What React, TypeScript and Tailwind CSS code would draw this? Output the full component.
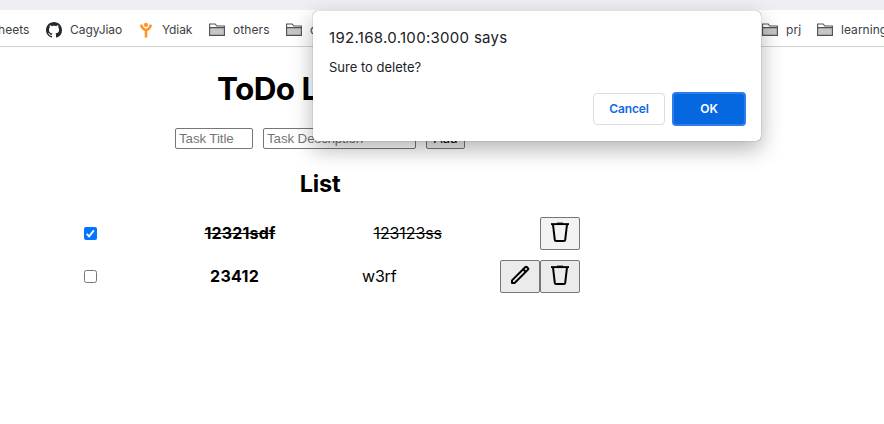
import React from "react";

function Folder() {
  return (
    <svg width="16" height="14" viewBox="0 0 16 14" className="block shrink-0">
      <path d="M.6 12.4V1h5.6l1.6 2h7.6v9.4z" fill="#fff" stroke="#505255" strokeWidth="1.1" />
      <path d="M.6 12.4V4.6h14.8v7.8z" fill="#c6c6c6" stroke="#505255" strokeWidth="1.1" />
    </svg>
  );
}

function GitHub() {
  return (
    <svg width="16" height="16" viewBox="0 0 16 16" className="block shrink-0" fill="#24292f">
      <path d="M8 0C3.58 0 0 3.58 0 8c0 3.54 2.29 6.53 5.47 7.59.4.07.55-.17.55-.38 0-.19-.01-.82-.01-1.49-2.01.37-2.53-.49-2.69-.94-.09-.23-.48-.94-.82-1.13-.28-.15-.68-.52-.01-.53.63-.01 1.08.58 1.23.82.72 1.21 1.87.87 2.33.66.07-.52.28-.87.51-1.07-1.78-.2-3.64-.89-3.64-3.95 0-.87.31-1.59.82-2.15-.08-.2-.36-1.02.08-2.12 0 0 .67-.21 2.2.82.64-.18 1.32-.27 2-.27s1.36.09 2 .27c1.53-1.04 2.2-.82 2.2-.82.44 1.1.16 1.92.08 2.12.51.56.82 1.27.82 2.15 0 3.07-1.87 3.75-3.65 3.95.29.25.54.73.54 1.48 0 1.07-.01 1.93-.01 2.2 0 .21.15.46.55.38A8.01 8.01 0 0 0 16 8c0-4.42-3.58-8-8-8z" />
    </svg>
  );
}

function Ydiak() {
  return (
    <svg width="12" height="16" viewBox="0 0 12 16" className="block shrink-0">
      <circle cx="6" cy="2.9" r="2.1" fill="#ff9429" />
      <path d="M1 2.6C2 5.600 3.600 7.600 6 8c2.400-.4 4-2.400 5-5.400M6 7.800v7.700" fill="none" stroke="#ff9429" strokeWidth="2.600" />
    </svg>
  );
}

function Trash() {
  return (
    <svg width="20" height="22" viewBox="0 0 20 22" className="block" fill="none" stroke="#000" strokeWidth="2">
      <path d="M1 2.100h18" strokeWidth="1.900" />
      <path d="M7 1.200h6" strokeWidth="1.200" />
      <path d="M3 2.500l1.800 15.300q.1 1.200 1.300 1.200h7.800q1.200 0 1.300-1.200L17 2.500" />
    </svg>
  );
}

function Pencil() {
  return (
    <svg width="20" height="20" viewBox="0 0 20 20" className="block" fill="none" stroke="#000" strokeWidth="2" strokeLinejoin="round">
      <path d="M2 18v-2.600L15.400 2q.7-.7 1.400 0l1.200 1.200q.7.700 0 1.400L4.600 18zM13.200 4.200l2.600 2.600" />
    </svg>
  );
}

const iconButton = "flex h-[33px] w-10 justify-center rounded-[2px] border border-[#767676] pt-1";

export default function App() {
  return (
    <div className="relative h-[424px] w-[884px] overflow-hidden bg-white font-['Inter',sans-serif] text-black">
      <div className="h-[10px] bg-[#eeeff2]" />
      <div className="flex h-[37px] items-center justify-between border-b border-[#d0d1d3] pb-px pt-1 text-[12px] leading-4 tracking-[0.04px] text-[#3c4043]">
        <div className="flex items-center whitespace-nowrap">
          <span className="flex w-[46px] shrink-0"><span className="-ml-[2px]">heets</span></span>
          <GitHub />
          <span className="ml-2 w-[70px] tracking-[-0.05px]">CagyJiao</span>
          <Ydiak />
          <span className="ml-[10px] w-[47px] tracking-[-0.1px]">Ydiak</span>
          <Folder />
          <span className="ml-2 w-[53px] tracking-[0.1px]">others</span>
          <Folder />
          <span className="ml-2">docs</span>
        </div>
        <div className="flex w-[122px] items-center whitespace-nowrap">
          <Folder />
          <span className="ml-2 w-[31px] shrink-0">prj</span>
          <Folder />
          <span className="ml-2">learning</span>
        </div>
      </div>

      <main className="w-[640px]">
        <h1 className="pl-[217px] pt-[22px] text-[31.5px] font-bold leading-10 tracking-[-0.6px]">ToDo List</h1>
        <div className="flex gap-[10px] pl-[175px] pt-[19px] font-['Liberation_Sans',sans-serif] text-[13.333px]">
          <input aria-label="Task Title" placeholder="Task Title" className="h-[21px] w-[78px] rounded-[2px] border border-[#767676] px-[3px] tracking-[-0.1px] placeholder:text-[#757575]" />
          <input aria-label="Task Description" placeholder="Task Description" className="h-[21px] w-[153px] rounded-[2px] border border-[#767676] px-[3px] tracking-[-0.1px] placeholder:text-[#757575]" />
          <button className="h-[21px] w-[39px] rounded-[2px] border border-[#767676] bg-[#efefef] leading-[19px]">Add</button>
        </div>
        <h2 className="pt-5 text-center text-[23.5px] font-bold leading-[29px] tracking-[-0.2px]">List</h2>
        <div className="flex flex-col gap-[10px] pl-[84px] pt-[19px] text-[16px]">
          <div className="flex h-[33px] w-[496px] items-center">
            <span className="flex h-[13px] w-[13px] items-center justify-center rounded-[2px] bg-[#0075ff]">
              <svg width="11" height="11" viewBox="0 0 11 11"><path d="M1.7 5.8l2.4 2.5 4.8-6" fill="none" stroke="#fff" strokeWidth="1.9" /></svg>
            </span>
            <b className="ml-[107.5px] w-[169px] pb-0.5 tracking-[0.15px] line-through">12321sdf</b>
            <span className="pb-0.5 tracking-[-0.1px] line-through">123123ss</span>
            <button aria-label="Delete" className={iconButton + " ml-auto bg-[#f3f3f3]"}><Trash /></button>
          </div>
          <div className="flex h-[33px] w-[496px] items-center">
            <span className="h-[13px] w-[13px] rounded-[2.5px] border border-[#767676]" />
            <b className="ml-[113px] w-[152px] pb-0.5 tracking-[0.3px]">23412</b>
            <span className="pb-0.5 tracking-[-0.2px]">w3rf</span>
            <button aria-label="Edit" className={iconButton + " ml-auto bg-[#ebebeb]"}><Pencil /></button>
            <button aria-label="Delete" className={iconButton + " bg-[#ebebeb]"}><Trash /></button>
          </div>
        </div>
      </main>

      <div role="dialog" className="absolute left-[313px] top-[11px] flex h-[130px] w-[448px] flex-col rounded-[5px] bg-white px-4 pt-[17px] text-[#202124] shadow-[0_0_1px_rgba(0,0,0,0.65),0_8px_22px_rgba(0,0,0,0.3)]">
        <div className="text-[15px] leading-5 tracking-[0.3px]">192.168.0.100:3000 says</div>
        <div className="mt-[10px] text-[13px] leading-[18px]">Sure to delete?</div>
        <div className="mt-4 flex items-center justify-end gap-[7px] text-[12px] font-semibold">
          <button className="h-8 w-[72px] rounded-[4px] border border-[#dadce0] tracking-[-0.15px] text-[#0f6be3]">Cancel</button>
          <button className="-mr-px h-[34px] w-[74px] rounded-[4px] border-2 border-[#2f7cec] bg-[#0668e1] tracking-[-0.2px] text-white">OK</button>
        </div>
      </div>
    </div>
  );
}
